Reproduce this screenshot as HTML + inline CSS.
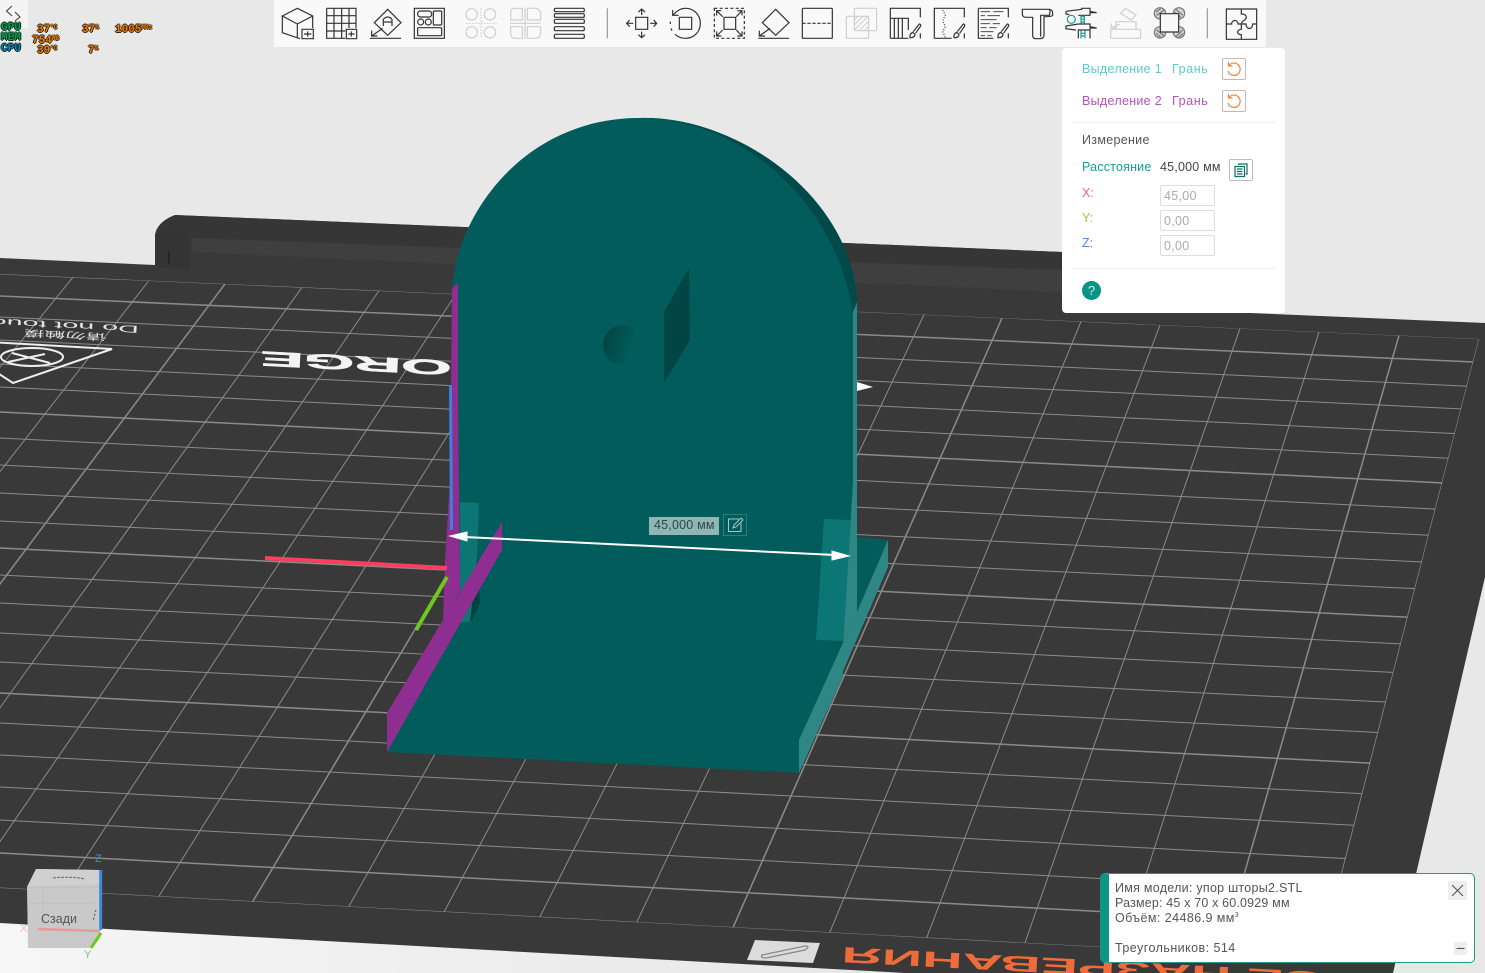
<!DOCTYPE html>
<html><head><meta charset="utf-8"><style>
html,body{margin:0;padding:0;width:1485px;height:973px;overflow:hidden;background:#e8e8e8;font-family:"Liberation Sans","Noto Sans CJK SC",sans-serif}
.a{position:absolute;white-space:nowrap;line-height:14px;font-size:12.5px}
.box{position:absolute;box-sizing:border-box;border:1px solid #bbb;border-radius:2px;background:#fff}
.inp{position:absolute;box-sizing:border-box;width:55px;height:21px;border:1px solid #ddd;border-radius:2px;left:1160px;color:#aaa;font-size:12.5px;line-height:20px;padding-left:3px;letter-spacing:.3px}
.h{position:absolute;font:bold 11px/11px "Liberation Mono",monospace;color:#e67f14;text-shadow:1px 0 0 #3a2205,-1px 0 0 #3a2205,0 1px 0 #3a2205,0 -1px 0 #3a2205;white-space:nowrap}
.l{color:#0f9a4c;text-shadow:1px 0 0 #032,-1px 0 0 #032,0 1px 0 #032,0 -1px 0 #032}
.u{font-size:6px;vertical-align:3px}
</style></head><body>
<svg width="1485" height="973" viewBox="0 0 1485 973" style="position:absolute;left:0;top:0">
<defs>
<clipPath id="g"><path d="M0 274L1479 339L1320 959L0 888Z"/></clipPath>
<linearGradient id="hole" x1="0" x2="1" y1="0" y2=".25"><stop offset="0" stop-color="#014240"/><stop offset=".8" stop-color="#015c5b"/></linearGradient>
<linearGradient id="fl" x1="0" x2="1" y1="0" y2="0"><stop offset="0" stop-color="#f6f6f6"/><stop offset=".6" stop-color="#e8e8e8"/></linearGradient>
</defs>
<path d="M0 915L0 973L1400 973L1400 960Z" fill="url(#fl)"/>
<path d="M0 258L155 265V235Q157 222 175 215L1062 252L1250 313L1485 323V577L1393 973H905L0 923Z" fill="#393939"/>
<path d="M175 215L1062 252V275L192 252V238L155 240V235Q157 222 175 215Z" fill="#363636"/>
<path d="M192 238L1062 270V292L192 252Z" fill="#3f3f3f"/>
<path d="M155 236Q160 229 175 230Q189 231 190 240V270L155 266Z" fill="#343434"/>
<path d="M169 251V264" stroke="#222" stroke-width="1.5"/>
<g clip-path="url(#g)" fill="none" stroke="#8b8b8b">
<path stroke-width="1" d="M0 274L1485 339M0 317L1485 387M0 340L1485 410M0 364L1485 435M0 387L1485 460M0 438L1485 511.5M0 465L1485 538M0 493L1485 565M0 521L1485 592M0 575L1485 648M0 603L1485 677M0 633L1485 707M0 662L1485 738M0 723L1485 800M0 755L1485 832M0 787L1485 866M0 820L1485 899M0 888L1485 968"/>
<path stroke-width="1.5" d="M0 296L1485 362.5M0 412L1485 485M0 548L1485 621M0 693L1485 769M0 853L1485 932"/>
<path stroke-width="1" d="M1479 339L1309 1000M1319 332L1106 1000M1240 328.4L1005 1000M1160 325L903 1000M1081 321.5L802 1000M924 314.6L600 1000M845 311L498 1000M767 307.7L397 1000M689 304.2L296 1000M534 297.4L94 1000M456 294L-8 1000M379 290.6L-109 1000M302 287.3L-210 1000M149 280.5L-412 1000M73 277.2L-513 1000M-3 273.9L-614 1000"/>
<path stroke-width="1.5" d="M1399 335.4L1208 1000M1002 318L701 1000M611 300.8L194 1000M225 283.9L-312 1000"/>
</g>
<!-- decals -->
<path d="M-10 342L112 349L13 383L-10 368" fill="none" stroke="#eee" stroke-width="2"/>
<ellipse cx="32" cy="357" rx="31" ry="9" fill="none" stroke="#eee" stroke-width="2"/>
<path d="M12 353L50 363M8 362L45 354" stroke="#eee" stroke-width="2"/>
<text transform="translate(139,326) rotate(183) scale(2.05,.72)" font-family="Liberation Sans" font-size="14" fill="#e4e4e4">Do not touch</text>
<text transform="translate(107,334) rotate(183) scale(1.6,.68)" font-family="Noto Sans CJK SC" font-size="13" fill="#ddd">请勿触摸</text>
<text transform="translate(452,361) rotate(182.9) scale(3.1,.98)" font-family="Liberation Sans" font-weight="bold" font-size="21" fill="#f4f4f4" stroke="#f4f4f4" stroke-width=".5">ORGE</text>
<path d="M755 940L820 943L813 963L747 960Z" fill="#dcdcdc"/>
<path d="M762 955L805 946Q811 946 805 950L766 958Q760 958 762 955Z" fill="none" stroke="#888" stroke-width="1.3"/>
<text transform="translate(842,947) rotate(183) scale(2.55,1)" text-anchor="end" font-family="Liberation Sans" font-weight="bold" font-size="22" fill="#ef6c3a">ОСЕ НАЗРЕВАНИЯ</text>
<!-- model -->
<path d="M640 118C735 115 852 195 857 302L853 315Z" fill="#014a49"/>
<path d="M853 312L857 302V612L843 643L853 480Z" fill="#2f8785"/>
<path d="M857 537L888 540L857 612Z" fill="#015c5b"/>
<path d="M888 540V567L799 773V740L843 643L857 612Z" fill="#2f8785"/>
<path d="M452 290C455 220 520 118 640 118C740 118 835 200 853 312V480L843 643L799 740V773L387 752L455 600L452 590Z" fill="#015c5b"/>
<path d="M799 740V773L843 676V643Z" fill="#2f8785"/>
<path d="M857 382L873 387L857 391Z" fill="#fff"/>
<circle cx="623" cy="345" r="20" fill="url(#hole)"/>
<path d="M689 268L690 340L664 383V312Z" fill="#014644"/>
<path d="M477 547L480 603L472 620L470 622Z" fill="#014140"/>
<path d="M460 502L479 503L477 560L470 622H460Z" fill="#0b7674"/>
<path d="M824 519L851 520L843 641L816 640Z" fill="#0b7674"/>
<path d="M458 283V400L460 590L443 625L445 560L450 480L452 288Z" fill="#8e2e90"/>
<path d="M502 522V550L387 752V713Z" fill="#8e2e90"/>
<path d="M450.5 385L451.5 530" stroke="#3f7fe0" stroke-width="3"/>
<path d="M265 558L447 568" stroke="#ff3d5e" stroke-width="4"/>
<path d="M447 577L416 630" stroke="#6fc81e" stroke-width="4"/>
<path d="M464 537L835 555" stroke="#fff" stroke-width="2"/>
<path d="M450 536L467 532V541ZM849 556L832 551V560Z" fill="#fff" stroke="#fff"/>
<rect x="649" y="517" width="70" height="18" fill="#8fb6b5"/>
<text x="654" y="529" font-family="Liberation Sans" font-size="12.5" letter-spacing=".2" style="fill:#2c4a4a">45,000 мм</text>
<rect x="723.5" y="514.5" width="23" height="21" fill="none" stroke="#2c7c7a"/>
<path d="M739 519H728.500V531.500H741V523M741 518L734 525L733 528L736 527L743 520Z" fill="none" stroke="#a8c8c8" stroke-width="1"/>
<!-- cube -->
<path d="M36 869L100 870V932L90 948H28L27 887Z" fill="#c9c9c9"/>
<path d="M36 869L100 870V884L27 887Z" fill="#d0d0d0"/>
<path d="M27 887H100M43 887V925M30 903H95" stroke="#bbb" stroke-width=".7" fill="none"/>
<path d="M53 878Q70 876 85 879" stroke="#666" stroke-width="1" fill="none" stroke-dasharray="3 1"/>
<path d="M96 910L93 921" stroke="#555" stroke-dasharray="2 2"/>
<text x="41" y="923" font-family="Liberation Sans" font-size="12.5" fill="#555">Сзади</text>
<path d="M38 929L100 931" stroke="#e89a9a" stroke-width="2.5"/>
<path d="M100.7 870V930" stroke="#3f86e0" stroke-width="3"/>
<path d="M101 933L91 948" stroke="#6fc81e" stroke-width="3"/>
<text x="95" y="862" font-family="Liberation Sans" font-size="11" fill="#3f86e0">Z</text>
<text x="84" y="958" font-family="Liberation Sans" font-size="11" fill="#6fc87e">Y</text>
<text x="20" y="932" font-family="Liberation Sans" font-size="11" fill="#f0b8b8">X</text>
<!-- top left -->
<rect width="28" height="28" fill="#f4f4f4"/>
<path d="M12 6L6.500 11L12 16M15 12L20 17L15 21" fill="none" stroke="#444" stroke-width="1.1"/>
<!-- toolbar -->
<rect x="274" width="992" height="47" fill="#f9f9f9"/>
<g transform="translate(270,0) scale(.33333)" fill="none" stroke="#333" stroke-width="3.6">
<path d="M37 48L82 25L128 48L82 72ZM37 48V98L90 116M82 72V115M128 48V84"/>
<path d="M96 88H130V116H96ZM113 94V110M102 102H124"/>
<path d="M170 25H258V84M170 25V115H226M192 25V115M215 25V115M237 25V84M170 47H258M170 70H258M170 93H226"/>
<path d="M229 88H260V116H229ZM244 94V110M235 102H254"/>
<path d="M353 28L393 68L353 106L313 68ZM340 78V58Q353 44 366 58V78M340 66H366M300 115H393M338 85L305 108M305 92V108H322"/>
<path d="M433 25H523V115H433Z"/><rect x="443" y="33" width="42" height="18" rx="8"/><rect x="490" y="33" width="25" height="42" rx="3"/><circle cx="452" cy="66" r="9"/><circle cx="475" cy="66" r="9"/><rect x="443" y="83" width="72" height="24" rx="3"/>
<g stroke="#cfcfcf"><circle cx="605" cy="43" r="17"/><circle cx="660" cy="43" r="17"/><circle cx="605" cy="97" r="17"/><circle cx="660" cy="97" r="17"/><path d="M633 25V115M588 70H680" stroke-dasharray="5 4"/>
<path d="M757 25H735Q722 25 722 38V60H757ZM772 25H795Q812 25 812 45V60H772ZM757 115H735Q722 115 722 100V80H757ZM772 115H795Q812 115 812 95V80H772ZM765 25V115M720 70H812" /></g>
<rect x="853" y="25" width="90" height="10" rx="4"/><rect x="853" y="41" width="90" height="11" rx="4"/><rect x="853" y="58" width="90" height="12" rx="4"/><rect x="853" y="80" width="90" height="12" rx="4"/><rect x="853" y="103" width="90" height="12" rx="4"/>
<path d="M1012 25V115" stroke="#999"/>
<path d="M1097 52H1133V88H1097ZM1115 27V45M1105 36L1115 27L1125 36M1115 95V113M1105 104L1115 113L1125 104M1070 70H1090M1079 60L1070 70L1079 80M1140 70H1160M1151 60L1160 70L1151 80"/>
<path d="M1228 52H1265V88H1228ZM1210 45Q1225 25 1247 25C1272 25 1291 45 1291 70C1291 95 1272 115 1247 115Q1228 115 1215 103M1208 30V46H1226M1201 65V72M1203 85L1206 92"/>
<path d="M1333 25H1423V115H1333Z" stroke-dasharray="9 7"/><path d="M1362 52H1397V88H1362ZM1340 32L1358 50M1340 46V32H1354M1416 32L1399 50M1402 32H1416V46M1340 108L1358 90M1340 94V108H1354M1416 108L1399 90M1416 94V108H1402"/>
<path d="M1517 28L1557 68L1517 106L1477 68ZM1465 115H1557M1500 85L1468 108M1468 92V108H1485"/>
</g>
<g transform="translate(770,0) scale(.33333)" fill="none" stroke="#333" stroke-width="3.6">
<rect x="97" y="25" width="90" height="90" rx="3"/><path d="M97 70H187" stroke-dasharray="10 5"/>
<g stroke="#cfcfcf"><rect x="253" y="25" width="67" height="67" rx="3"/><rect x="229" y="49" width="67" height="66" rx="3"/><path d="M253 60L264 49M253 75L279 49M253 90L294 49M268 92L296 64M283 92L296 79" stroke-width="3"/></g>
<path d="M361 115V25H451V52M451 100V115M361 55H415V90M361 115H415M373 55V115M385 55V115M397 55V115" />
<path d="M493 115V25H583V52M583 100V115M493 115H545"/>
<path d="M518 30L526 45L518 62L526 80L518 95L526 112" stroke-dasharray="3 5"/>
<path d="M625 25H715V52M715 100V115M625 25V115H670"/>
<path d="M632 35H660M670 35H700M632 47H645M652 47H690M632 59H680M632 71H660M668 71H690M632 83H650M658 83H680M632 95H670M632 107H645M652 107H665" stroke-width="2.6"/>
<path d="M420 113Q418 102 428 97L435 103Q435 113 420 113ZM430 95L448 72Q453 72 452 78L437 100"/>
<path d="M552 113Q550 102 560 97L567 103Q567 113 552 113ZM562 95L580 72Q585 72 584 78L569 100"/>
<path d="M684 113Q682 102 692 97L699 103Q699 113 684 113ZM694 95L712 72Q717 72 716 78L701 100"/>
<path d="M757 28H838Q848 30 848 38V46Q846 50 822 50V106Q822 116 808 116H798Q788 116 788 106V52H766Q757 50 757 42ZM838 28Q842 34 838 46H812V110"/>
<path d="M888 34L935 28V25H960V34L980 38H960V46L945 46H925M888 34V42L898 44M888 78L925 72H960V80L980 84H960V90H925V115M960 90V115M888 78V86L918 90"/>
<circle cx="904" cy="58" r="12" stroke="#1a9a8e"/><path d="M933 46V70M943 46V70M933 50H945M933 58H945M933 66H945M933 92V115M945 92V115M933 100H945M933 108H945" stroke="#1a9a8e"/>
<g stroke="#cfcfcf"><rect x="1022" y="88" width="90" height="27" rx="3"/><path d="M1052 40L1066 25L1098 45L1084 60ZM1038 88V65H1098V88"/><path d="M1050 72L1024 84M1024 70V84H1038"/></g>
<g stroke="#777"><circle cx="1170" cy="40" r="17" fill="#d2d2d2"/><circle cx="1227" cy="40" r="17" fill="#d2d2d2"/><circle cx="1170" cy="97" r="17" fill="#d2d2d2"/><circle cx="1227" cy="97" r="17" fill="#d2d2d2"/><path d="M1158 36L1172 26M1160 46L1182 30M1218 28L1238 46M1214 36L1232 52M1158 100L1172 112M1160 90L1182 108M1238 90L1218 110M1240 100L1226 112"/></g>
<path d="M1171 41H1226V96H1171Z" fill="#f9f9f9"/>
<path d="M1312 25V115" stroke="#999"/>
<path d="M1369 27H1460V118H1369ZM1414 27V42C1428 42 1434 52 1424 60Q1416 64 1414 72M1369 72H1385C1385 58 1404 58 1404 72H1414H1428C1428 90 1448 90 1448 72H1460M1414 72V88C1400 88 1398 104 1414 104V118" />
</g>
</svg>
<div class="h l" style="left:1px;top:23px">GPU</div>
<div class="h l" style="left:1px;top:33px">MEM</div>
<div class="h l" style="left:1px;top:44px;color:#1c78b8">CPU</div>
<div class="h" style="left:37px;top:22px">37<span class="u">°C</span></div>
<div class="h" style="left:82px;top:22px">37<span class="u">%</span></div>
<div class="h" style="left:115px;top:22px">1005<span class="u">MHz</span></div>
<div class="h" style="left:32px;top:33px">754<span class="u">MB</span></div>
<div class="h" style="left:37px;top:43px">39<span class="u">°C</span></div>
<div class="h" style="left:88px;top:43px">7<span class="u">%</span></div>

<!-- panel -->
<div style="position:absolute;left:1062px;top:48px;width:223px;height:265px;background:#fff;border-radius:4px"></div>
<div class="a" style="left:1082px;top:62px;color:#5ecaca;letter-spacing:.3px">Выделение 1</div>
<div class="a" style="left:1172px;top:62px;color:#5ecaca;letter-spacing:.6px">Грань</div>
<div class="a" style="left:1082px;top:94px;color:#b64fc2;letter-spacing:.3px">Выделение 2</div>
<div class="a" style="left:1172px;top:94px;color:#b64fc2;letter-spacing:.6px">Грань</div>
<div class="box" style="left:1222px;top:58px;width:24px;height:22px"><svg width="22" height="20" style="display:block"><path d="M6 6.500A6.200 6.200 0 1 1 5 12M5.500 3V7H9.500" fill="none" stroke="#ee8533" stroke-width="1.2"/></svg></div>
<div class="box" style="left:1222px;top:90px;width:24px;height:22px"><svg width="22" height="20" style="display:block"><path d="M6 6.500A6.200 6.200 0 1 1 5 12M5.500 3V7H9.500" fill="none" stroke="#ee8533" stroke-width="1.2"/></svg></div>
<div style="position:absolute;left:1072px;top:122px;width:203px;height:1px;background:#eee"></div>
<div class="a" style="left:1082px;top:133px;color:#555;letter-spacing:.3px">Измерение</div>
<div class="a" style="left:1082px;top:160px;color:#179c8e;letter-spacing:.2px">Расстояние</div>
<div class="a" style="left:1160px;top:160px;color:#444;letter-spacing:.2px">45,000 мм</div>
<div class="box" style="left:1229px;top:159px;width:24px;height:22px"><svg width="22" height="20" style="display:block"><path d="M8.500 5V4H17V14H15.500M5 6.500H14.500V16.500H5ZM7 9H12.500M7 11.500H12.500M7 14H12.500" fill="none" stroke="#0f6e68" stroke-width="1.2"/></svg></div>
<div class="a" style="left:1082px;top:186px;color:#e9607a">X:</div>
<div class="a" style="left:1082px;top:211px;color:#93cc4a">Y:</div>
<div class="a" style="left:1082px;top:236px;color:#4f8cdc">Z:</div>
<div class="inp" style="top:185px">45,00</div>
<div class="inp" style="top:210px">0,00</div>
<div class="inp" style="top:235px">0,00</div>
<div style="position:absolute;left:1072px;top:268px;width:203px;height:1px;background:#eee"></div>
<div style="position:absolute;left:1082px;top:281px;width:19px;height:19px;border-radius:50%;background:#0b9385;color:#cfeeea;font-size:13px;line-height:19px;text-align:center">?</div>

<!-- info dialog -->
<div style="position:absolute;box-sizing:border-box;left:1100px;top:873px;width:375px;height:90px;background:#fff;border:1px solid #1a9b8c;border-left:9px solid #0d9685;border-radius:5px"></div>
<div class="a" style="left:1115px;top:881px;color:#555;letter-spacing:.27px">Имя модели: упор шторы2.STL</div>
<div class="a" style="left:1115px;top:896px;color:#555;letter-spacing:.17px">Размер: 45 x 70 x 60.0929 мм</div>
<div class="a" style="left:1115px;top:911px;color:#555;letter-spacing:.42px">Объём: 24486.9 мм<sup style="font-size:7px;line-height:0">3</sup></div>
<div class="a" style="left:1115px;top:941px;color:#555;letter-spacing:.45px">Треугольников: 514</div>
<div style="position:absolute;left:1448px;top:881px;width:19px;height:19px;background:#eee"><svg width="19" height="19" style="display:block"><path d="M4 4L15 15M15 4L4 15" stroke="#555" stroke-width="1.1"/></svg></div>
<div style="position:absolute;left:1454px;top:942px;width:13px;height:13px;background:#eee;border-radius:2px"><svg width="13" height="13" style="display:block"><path d="M2.500 6.500H10.500" stroke="#555" stroke-width="1.1"/></svg></div>
</body></html>
